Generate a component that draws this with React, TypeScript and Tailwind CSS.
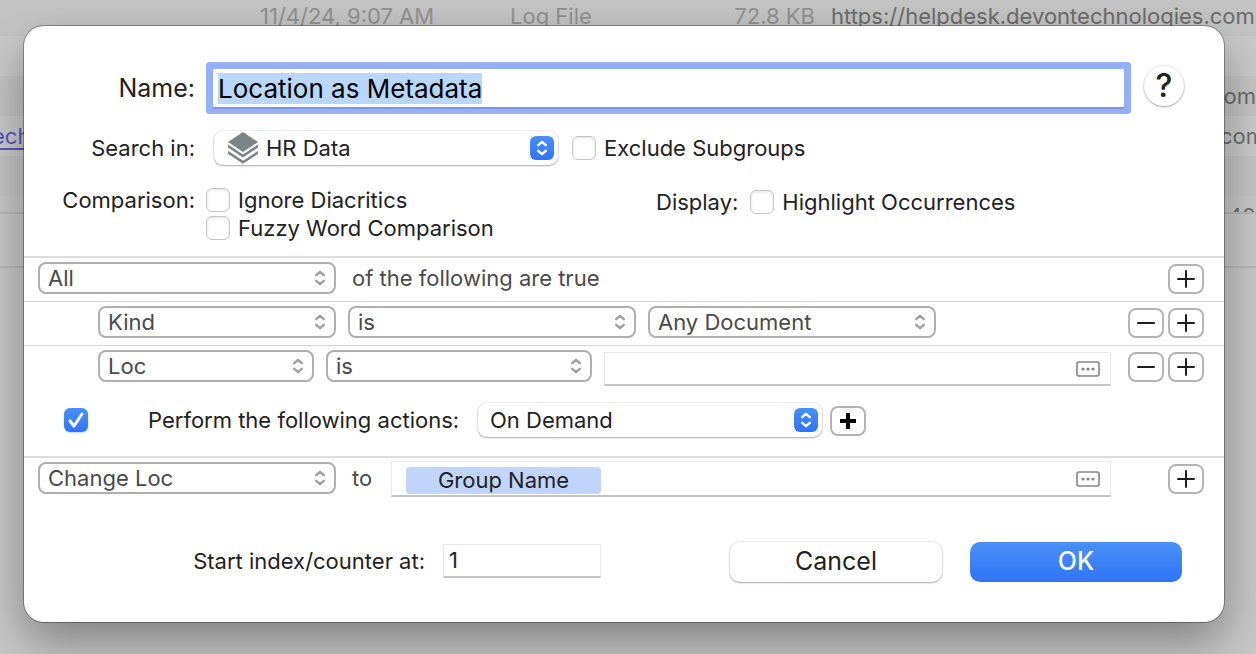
import { useEffect, useRef, type ReactNode } from "react";
import clsx from "clsx";

const files = [
  { link: "", date: "11/4/24, 9:07 AM", kind: "Log File", size: "72.8 KB", url: "https://helpdesk.devontechnologies.com", tail: "" },
  { link: "", date: "", kind: "", size: "", url: "", tail: "" },
  { link: "", date: "", kind: "", size: "", url: "", tail: "om" },
  { link: "ech", date: "", kind: "", size: "", url: "", tail: "com" },
  { link: "", date: "", kind: "", size: "", url: "", tail: "" },
];

function FileList() {
  return (
    <div aria-hidden="true" className="absolute inset-0 overflow-hidden bg-[#c8c8c8] text-[22px] text-[#929292]">
      <div className="-mt-1">
        {files.map((f, i) => (
          <div
            key={i}
            className={clsx("flex h-10 items-center whitespace-nowrap", i % 2 === 0 ? "bg-[#c4c4c4]" : "bg-[#cacaca]")}
          >
            <span className="-ml-2 w-[268px] text-[#5b55c4] underline underline-offset-4">{f.link}</span>
            <span className="w-[250px]">{f.date}</span>
            <span className="w-[165px]">{f.kind}</span>
            <span className="w-[140px] text-right">{f.size}</span>
            <span className="ml-4 flex-1 text-[#6c6c6c]">{f.url}</span>
            {f.tail && <span className="w-9 text-right text-[#6c6c6c]">{f.tail}</span>}
          </div>
        ))}
        <div className="flex h-[18px] justify-end overflow-hidden border-b-2 border-[#b8b8b8] pt-1 text-[#6c6c6c]">40</div>
        <div className="h-[54px] border-b-2 border-[#b8b8b8]" />
      </div>
    </div>
  );
}

function Chevrons({ className }: { className?: string }) {
  return (
    <svg viewBox="0 0 12 18" className={clsx("h-[18px] w-3", className)} fill="none" stroke="currentColor" strokeWidth="2.4" strokeLinecap="round" strokeLinejoin="round">
      <path d="M2.2 6.2 6 2.8l3.8 3.4M2.2 11.8 6 15.2l3.8-3.4" />
    </svg>
  );
}

function LayersIcon() {
  return (
    <svg viewBox="0 0 30 32" className="h-8 w-[30px]" fill="#7b8487">
      <path d="M15 0 30 10 15 20 0 10Z" />
      <path d="M0 12.5 15 22.5 30 12.5V15.5L15 25.5 0 15.5Z" />
      <path d="M0 18.8 15 28.8 30 18.8V21.8L15 31.8 0 21.8Z" />
    </svg>
  );
}

function PopUp({ label, value, className, icon }: { label: string; value: string; className?: string; icon?: ReactNode }) {
  return (
    <div className={clsx("relative h-[34px]", className)}>
      <select
        aria-label={label}
        className={clsx(
          "h-full w-full appearance-none rounded-[9px] bg-white pr-10 text-[#222] shadow-[0_0_0_1px_rgba(0,0,0,0.06),0_1px_2px_rgba(0,0,0,0.3)] outline-none",
          icon ? "pl-[52px]" : "pl-3"
        )}
      >
        <option>{value}</option>
      </select>
      {icon && <span className="pointer-events-none absolute inset-y-0 left-[14px] flex items-center">{icon}</span>}
      <span className="pointer-events-none absolute top-[5px] right-1 flex size-6 items-center justify-center rounded-md bg-linear-to-b from-[#4a90f8] to-[#2f74f6] text-white">
        <Chevrons />
      </span>
    </div>
  );
}

function RuleSelect({ label, value, className }: { label: string; value: string; className?: string }) {
  return (
    <div className={clsx("relative h-8", className)}>
      <select
        aria-label={label}
        className="h-full w-full appearance-none rounded-lg border-2 border-[#afafaf] bg-white pr-8 pl-2 text-[#4a4a4a] outline-none"
      >
        <option>{value}</option>
      </select>
      <Chevrons className="pointer-events-none absolute top-[7px] right-[10px] text-[#a0a0a0]" />
    </div>
  );
}

function RuleButton({ kind }: { kind: "add" | "remove" | "bold" }) {
  return (
    <button
      type="button"
      aria-label={kind === "remove" ? "Remove" : "Add"}
      className="flex h-[30px] w-9 shrink-0 items-center justify-center rounded-lg border-2 border-[#b4b4b4] bg-white text-[#1e1e1e]"
    >
      {kind === "bold" ? (
        <svg viewBox="0 0 16 16" className="size-4" stroke="#000" strokeWidth="4">
          <path d="M8 0v16M0 8h16" />
        </svg>
      ) : (
        <svg viewBox="0 0 18 18" className="size-[18px]" stroke="currentColor" strokeWidth="2" strokeLinecap="round">
          <path d={kind === "add" ? "M9 1v16M1 9h16" : "M1 9h16"} />
        </svg>
      )}
    </button>
  );
}

function Check({ children }: { children: ReactNode }) {
  return (
    <label className="flex items-center gap-2 whitespace-nowrap">
      <input
        type="checkbox"
        className="size-6 appearance-none rounded-md border border-[#c6c6c6] bg-white shadow-[inset_0_1px_3px_rgba(0,0,0,0.12)]"
      />
      {children}
    </label>
  );
}

function PlaceholderButton() {
  return (
    <button type="button" aria-label="Insert placeholder" className="text-[#85858a]">
      <svg viewBox="0 0 24 16" className="h-4 w-6" fill="none" stroke="currentColor" strokeWidth="1.6">
        <rect x="1" y="1" width="22" height="14" rx="2" />
        <g fill="currentColor" stroke="none">
          <circle cx="7" cy="8" r="1.6" />
          <circle cx="12" cy="8" r="1.6" />
          <circle cx="17" cy="8" r="1.6" />
        </g>
      </svg>
    </button>
  );
}

export default function App() {
  const nameRef = useRef<HTMLInputElement>(null);

  useEffect(() => {
    nameRef.current?.focus();
    nameRef.current?.select();
  }, []);

  return (
    <div className="relative min-h-screen overflow-hidden pt-[26px] pr-8 pb-8 pl-6 font-['Inter',sans-serif]">
      <FileList />

      <form
        onSubmit={(e) => e.preventDefault()}
        className="relative rounded-[20px] bg-white pt-9 pb-10 text-[22px] leading-7 text-[#222] shadow-[0_0_0_1px_rgba(0,0,0,0.3),0_20px_48px_rgba(0,0,0,0.36)]"
      >
        {/* Name */}
        <div className="flex h-[52px] items-center gap-[11px] pr-10">
          <label htmlFor="name" className="w-[171px] text-right text-[25px]">Name:</label>
          <input
            id="name"
            ref={nameRef}
            defaultValue="Location as Metadata"
            className="mx-[7px] h-[38px] min-w-0 flex-1 rounded-[1px] bg-white px-[5px] text-[26px] text-black shadow-[0_2px_0_#7d97dd,0_0_0_7px_#95b0f8] outline-none selection:bg-[#b9d6fb] selection:text-black"
          />
          <button
            type="button"
            aria-label="Help"
            className="mb-1 ml-[2px] size-10 rounded-full bg-white text-[32px] font-medium text-[#222] shadow-[0_0_0_1px_rgba(0,0,0,0.06),0_1px_2px_rgba(0,0,0,0.3)]"
          >
            ?
          </button>
        </div>

        {/* Search in */}
        <div className="mt-[17px] flex items-center">
          <span className="w-[171px] text-right">Search in:</span>
          <PopUp label="Search in" value="HR Data" className="ml-[19px] w-[344px]" icon={<LayersIcon />} />
          <div className="ml-[14px]">
            <Check>Exclude Subgroups</Check>
          </div>
        </div>

        {/* Comparison and display */}
        <div className="mt-[21px] flex items-start">
          <span className="w-[171px] text-right">Comparison:</span>
          <div className="ml-[11px] w-[450px]">
            <Check>Ignore Diacritics</Check>
            <Check>Fuzzy Word Comparison</Check>
          </div>
          <div className="flex gap-3 pt-[2px]">
            <span>Display:</span>
            <Check>Highlight Occurrences</Check>
          </div>
        </div>

        {/* Conditions */}
        <div className="mt-[14px] text-[#4a4a4a]">
          <div className="flex h-[45px] items-start gap-4 border-t-2 border-[#dcdcdc] pt-1 pr-5 pl-[14px]">
            <RuleSelect label="Match" value="All" className="w-[298px]" />
            <span className="flex-1 pt-[2px]">of the following are true</span>
            <div className="pt-[2px]">
              <RuleButton kind="add" />
            </div>
          </div>
          <div className="flex h-11 items-start gap-3 border-t border-[#d4d4d4] pt-1 pr-5 pl-[74px]">
            <RuleSelect label="Attribute" value="Kind" className="w-[238px]" />
            <RuleSelect label="Operator" value="is" className="w-72" />
            <RuleSelect label="Value" value="Any Document" className="w-72" />
            <div className="ml-auto flex gap-1 pt-[2px]">
              <RuleButton kind="remove" />
              <RuleButton kind="add" />
            </div>
          </div>
          <div className="flex h-11 items-start gap-3 border-t border-[#d4d4d4] pt-1 pr-5 pl-[74px]">
            <RuleSelect label="Attribute" value="Loc" className="w-[216px]" />
            <RuleSelect label="Operator" value="is" className="w-[266px]" />
            <div className="mt-[2px] mr-[5px] flex h-[34px] flex-1 items-center border border-b-2 border-[#e8e8e8] border-b-[#c4c4c4] pr-[10px]">
              <input aria-label="Location" className="h-full min-w-0 flex-1 px-2 outline-none" />
              <PlaceholderButton />
            </div>
            <div className="flex gap-1 pt-[2px]">
              <RuleButton kind="remove" />
              <RuleButton kind="add" />
            </div>
          </div>
        </div>

        {/* Actions */}
        <div className="flex h-[67px] items-center pb-[6px] pl-10">
          <span className="relative mr-[60px] flex size-6">
            <input
              id="perform"
              type="checkbox"
              defaultChecked
              className="size-6 appearance-none rounded-md bg-linear-to-b from-[#4a90f8] to-[#2f74f6] shadow-[0_1px_2px_rgba(47,116,246,0.3)]"
            />
            <svg viewBox="0 0 24 24" className="pointer-events-none absolute inset-0" fill="none" stroke="#fff" strokeWidth="3" strokeLinecap="round" strokeLinejoin="round">
              <path d="m6 13 4 5 8-12" />
            </svg>
          </span>
          <label htmlFor="perform" className="w-[314px] whitespace-nowrap">Perform the following actions:</label>
          <PopUp label="Trigger" value="On Demand" className="ml-4 w-[344px]" />
          <div className="ml-2 pt-[2px]">
            <RuleButton kind="bold" />
          </div>
        </div>

        <div className="flex items-start gap-4 border-t-2 border-[#dcdcdc] pt-[3px] pr-5 pl-[14px] text-[#4a4a4a]">
          <RuleSelect label="Action" value="Change Loc" className="mt-[1px] w-[298px]" />
          <span className="w-[23px] pt-[3px]">to</span>
          <div className="mr-[41px] flex h-9 flex-1 items-center border border-b-2 border-[#e8e8e8] border-b-[#c4c4c4] pr-[10px] pl-[14px]">
            <span className="mt-1 h-[27px] w-[195px] rounded-sm bg-[#c1d4fb] text-center leading-[26px] text-[#222]">Group Name</span>
            <input aria-label="New location" className="h-full min-w-0 flex-1 outline-none" />
            <PlaceholderButton />
          </div>
          <div className="pt-[3px]">
            <RuleButton kind="add" />
          </div>
        </div>

        {/* Footer */}
        <div className="mt-[45px] flex h-10 items-center pr-[42px]">
          <div className="flex items-center pb-[3px]">
            <label htmlFor="counter" className="w-[401px] text-right">Start index/counter at:</label>
            <input
              id="counter"
              defaultValue="1"
              className="ml-[18px] h-[34px] w-[158px] border border-b-2 border-[#e8e8e8] border-b-[#c4c4c4] px-[5px] outline-none"
            />
          </div>
          <button
            type="button"
            className="ml-auto h-10 w-[212px] rounded-[10px] bg-white pb-[2px] text-[25px] text-[#222] shadow-[0_0_0_1px_rgba(0,0,0,0.06),0_1px_2px_rgba(0,0,0,0.3)]"
          >
            Cancel
          </button>
          <button
            type="submit"
            className="ml-7 h-10 w-[212px] rounded-[10px] bg-linear-to-b from-[#4a90f8] to-[#2f74f6] pb-[2px] text-[25px] font-medium text-white"
          >
            OK
          </button>
        </div>
      </form>
    </div>
  );
}
